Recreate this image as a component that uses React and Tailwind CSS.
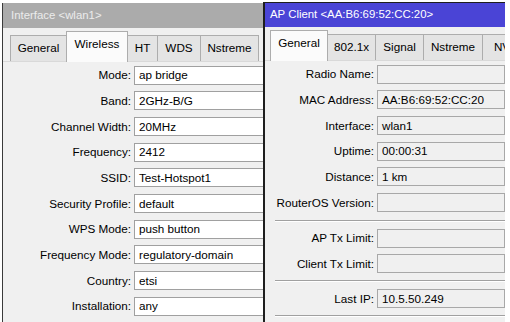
import React from 'react';

const leftTabs = [
  { name: 'General', w: 'w-[57px]' },
  { name: 'Wireless', w: 'w-[62px]', active: true },
  { name: 'HT', w: 'w-[31px]' },
  { name: 'WDS', w: 'w-[44px]' },
  { name: 'Nstreme', w: 'w-[59px]' },
];

const rightTabs = [
  { name: 'General', w: 'w-[58px]', active: true },
  { name: '802.1x', w: 'w-[49px]' },
  { name: 'Signal', w: 'w-[49px]' },
  { name: 'Nstreme', w: 'w-[60px]' },
  { name: 'NV', w: 'w-[40px]' },
];

const wireless = [
  ['Mode', 'ap bridge'],
  ['Band', '2GHz-B/G'],
  ['Channel Width', '20MHz'],
  ['Frequency', '2412'],
  ['SSID', 'Test-Hotspot1'],
  ['Security Profile', 'default'],
  ['WPS Mode', 'push button'],
  ['Frequency Mode', 'regulatory-domain'],
  ['Country', 'etsi'],
  ['Installation', 'any'],
];

const client = [
  ['Radio Name', ''],
  ['MAC Address', 'AA:B6:69:52:CC:20'],
  ['Interface', 'wlan1'],
  ['Uptime', '00:00:31'],
  ['Distance', '1 km'],
  ['RouterOS Version', ''],
];

function TabStrip({ tabs, pad }) {
  return (
    <div className={`h-[34px] flex items-end border-b border-[#d9d9d9] ${pad}`}>
      {tabs.map((t, i) => (
        <div
          key={t.name}
          className={`${t.w} shrink-0 border border-b-0 border-[#adadad] flex justify-center whitespace-nowrap overflow-hidden ${i > 0 ? '-ml-px' : ''} ${
            t.active ? 'relative z-10 h-[31px] -mb-px bg-[#fbfbfb] pt-[6px]' : 'h-[26px] bg-[#e4e4e4] pt-[6px]'
          }`}
        >
          {t.name}
        </div>
      ))}
    </div>
  );
}

function Row({ label, value, labelW, ro }) {
  return (
    <div className="h-[25.67px] flex items-center pt-px">
      <div className={`${labelW} shrink-0 text-right pr-[3px]`}>{label}:</div>
      <div
        className={`flex-1 h-[19px] border flex items-center pl-[4px] whitespace-nowrap ${
          ro ? 'bg-[#f0f0f0] border-[#a8a8a8]' : 'bg-white border-[#a0a0a0] border-r-0'
        }`}
      >
        {value}
      </div>
    </div>
  );
}

function Sep() {
  return (
    <div className="ml-[10px] border-t border-[#a0a0a0] border-b border-b-white" />
  );
}

export default function App() {
  return (
    <div
      className="w-[510px] h-[322px] bg-white overflow-hidden flex pt-[3px] text-[11.7px] text-black leading-none"
      style={{ fontFamily: '"Liberation Sans", Arial, sans-serif' }}
    >
      <div className="w-[2px] shrink-0" />

      <div className="w-[261px] shrink-0 border-l border-[#3a3a3a] bg-[#f0f0f0] flex flex-col overflow-hidden">
        <div className="h-[25px] bg-[#ababab] text-[#ececec] text-[11.4px] flex items-center pl-[8px]">
          Interface &lt;wlan1&gt;
        </div>
        <TabStrip tabs={leftTabs} pad="pl-[7px]" />
        <div className="flex flex-col">
          {wireless.map(([l, v]) => (
            <Row key={l} label={l} value={v} labelW="w-[131px]" />
          ))}
        </div>
      </div>

      <div className="w-[242px] shrink-0 border-l-2 border-t border-[#1e1e1e] bg-[#f0f0f0] flex flex-col overflow-hidden -mt-px">
        <div className="h-[24px] bg-[#4a44d6] text-white text-[11.4px] flex items-center pl-[5px]">
          AP Client &lt;AA:B6:69:52:CC:20&gt;
        </div>
        <TabStrip tabs={rightTabs} pad="pl-[5px]" />
        <div className="flex flex-col">
          {client.map(([l, v]) => (
            <Row key={l} label={l} value={v} labelW="w-[112px]" ro />
          ))}
          <div className="h-[5px]" />
          <Sep />
          <div className="h-[3px]" />
          <Row label="AP Tx Limit" value="" labelW="w-[112px]" ro />
          <Row label="Client Tx Limit" value="" labelW="w-[112px]" ro />
          <div className="h-[4px]" />
          <Sep />
          <div className="h-[3px]" />
          <Row label="Last IP" value="10.5.50.249" labelW="w-[112px]" ro />
          <div className="h-[4px]" />
          <Sep />
        </div>
      </div>
    </div>
  );
}
